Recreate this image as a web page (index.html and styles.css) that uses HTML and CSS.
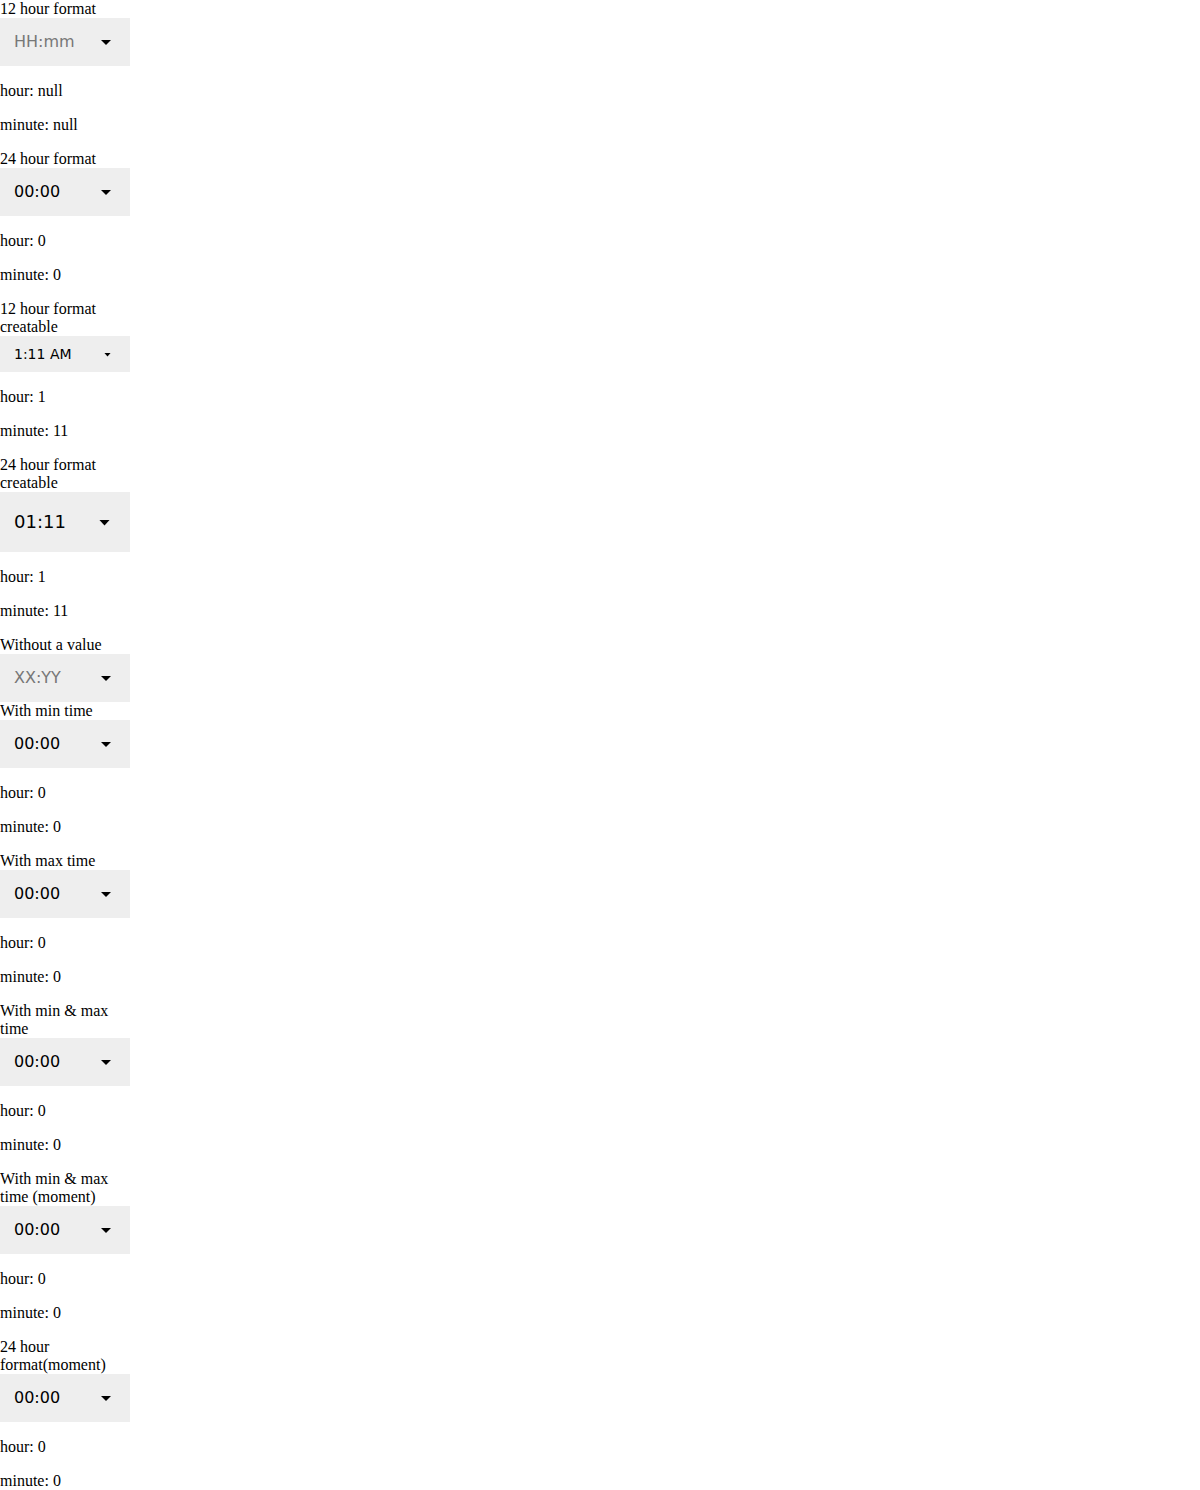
FILE: index.html
```html
<!DOCTYPE html>
<html>
<head>
<meta charset="utf-8">
<link rel="stylesheet" href="styles.css">
</head>
<body>
<div class="col">
  <div class="label">12 hour format</div>
  <div class="select"><span class="value placeholder">HH:mm</span><span class="arrow"></span></div>
  <p>hour: null</p>
  <p>minute: null</p>

  <div class="label">24 hour format</div>
  <div class="select"><span class="value">00:00</span><span class="arrow"></span></div>
  <p>hour: 0</p>
  <p>minute: 0</p>

  <div class="label">12 hour format creatable</div>
  <div class="select small"><span class="value">1:11 AM</span><span class="arrow"></span></div>
  <p>hour: 1</p>
  <p>minute: 11</p>

  <div class="label">24 hour format creatable</div>
  <div class="select large"><span class="value">01:11</span><span class="arrow"></span></div>
  <p>hour: 1</p>
  <p>minute: 11</p>

  <div class="label">Without a value</div>
  <div class="select"><span class="value placeholder">XX:YY</span><span class="arrow"></span></div>

  <div class="label">With min time</div>
  <div class="select"><span class="value">00:00</span><span class="arrow"></span></div>
  <p>hour: 0</p>
  <p>minute: 0</p>

  <div class="label">With max time</div>
  <div class="select"><span class="value">00:00</span><span class="arrow"></span></div>
  <p>hour: 0</p>
  <p>minute: 0</p>

  <div class="label">With min &amp; max time</div>
  <div class="select"><span class="value">00:00</span><span class="arrow"></span></div>
  <p>hour: 0</p>
  <p>minute: 0</p>

  <div class="label">With min &amp; max time (moment)</div>
  <div class="select"><span class="value">00:00</span><span class="arrow"></span></div>
  <p>hour: 0</p>
  <p>minute: 0</p>

  <div class="label">24 hour format(moment)</div>
  <div class="select"><span class="value">00:00</span><span class="arrow"></span></div>
  <p>hour: 0</p>
  <p>minute: 0</p>
</div>
</body>
</html>
```

FILE: styles.css
```css
html, body {
  margin: 0;
  padding: 0;
  background: #ffffff;
}
body {
  font-family: "Liberation Serif", "Times New Roman", serif;
  font-size: 16px;
  line-height: 18px;
  color: #000000;
}
.col {
  width: 130px;
}
.label {
  line-height: 18px;
}
p {
  margin: 16px 0;
  line-height: 18px;
}
.select {
  box-sizing: border-box;
  width: 130px;
  height: 48px;
  background: #eeeeee;
  display: flex;
  align-items: center;
  justify-content: space-between;
  padding: 0 19px 0 14px;
  font-family: "DejaVu Sans", sans-serif;
  font-size: 16px;
  color: #000000;
}
.value.placeholder {
  color: #777777;
}
.arrow {
  display: block;
  width: 10px;
  height: 5px;
  background: #000000;
  clip-path: polygon(0 0, 100% 0, 50% 100%);
  margin-top: 1px;
}
.select.small {
  height: 36px;
  font-size: 14px;
  padding-right: 19px;
}
.select.small .arrow {
  width: 7px;
  height: 4px;
}
.select.large {
  height: 60px;
  font-size: 18px;
  padding-right: 20px;
}
.select.large .arrow {
  width: 11px;
  height: 6px;
}
```
